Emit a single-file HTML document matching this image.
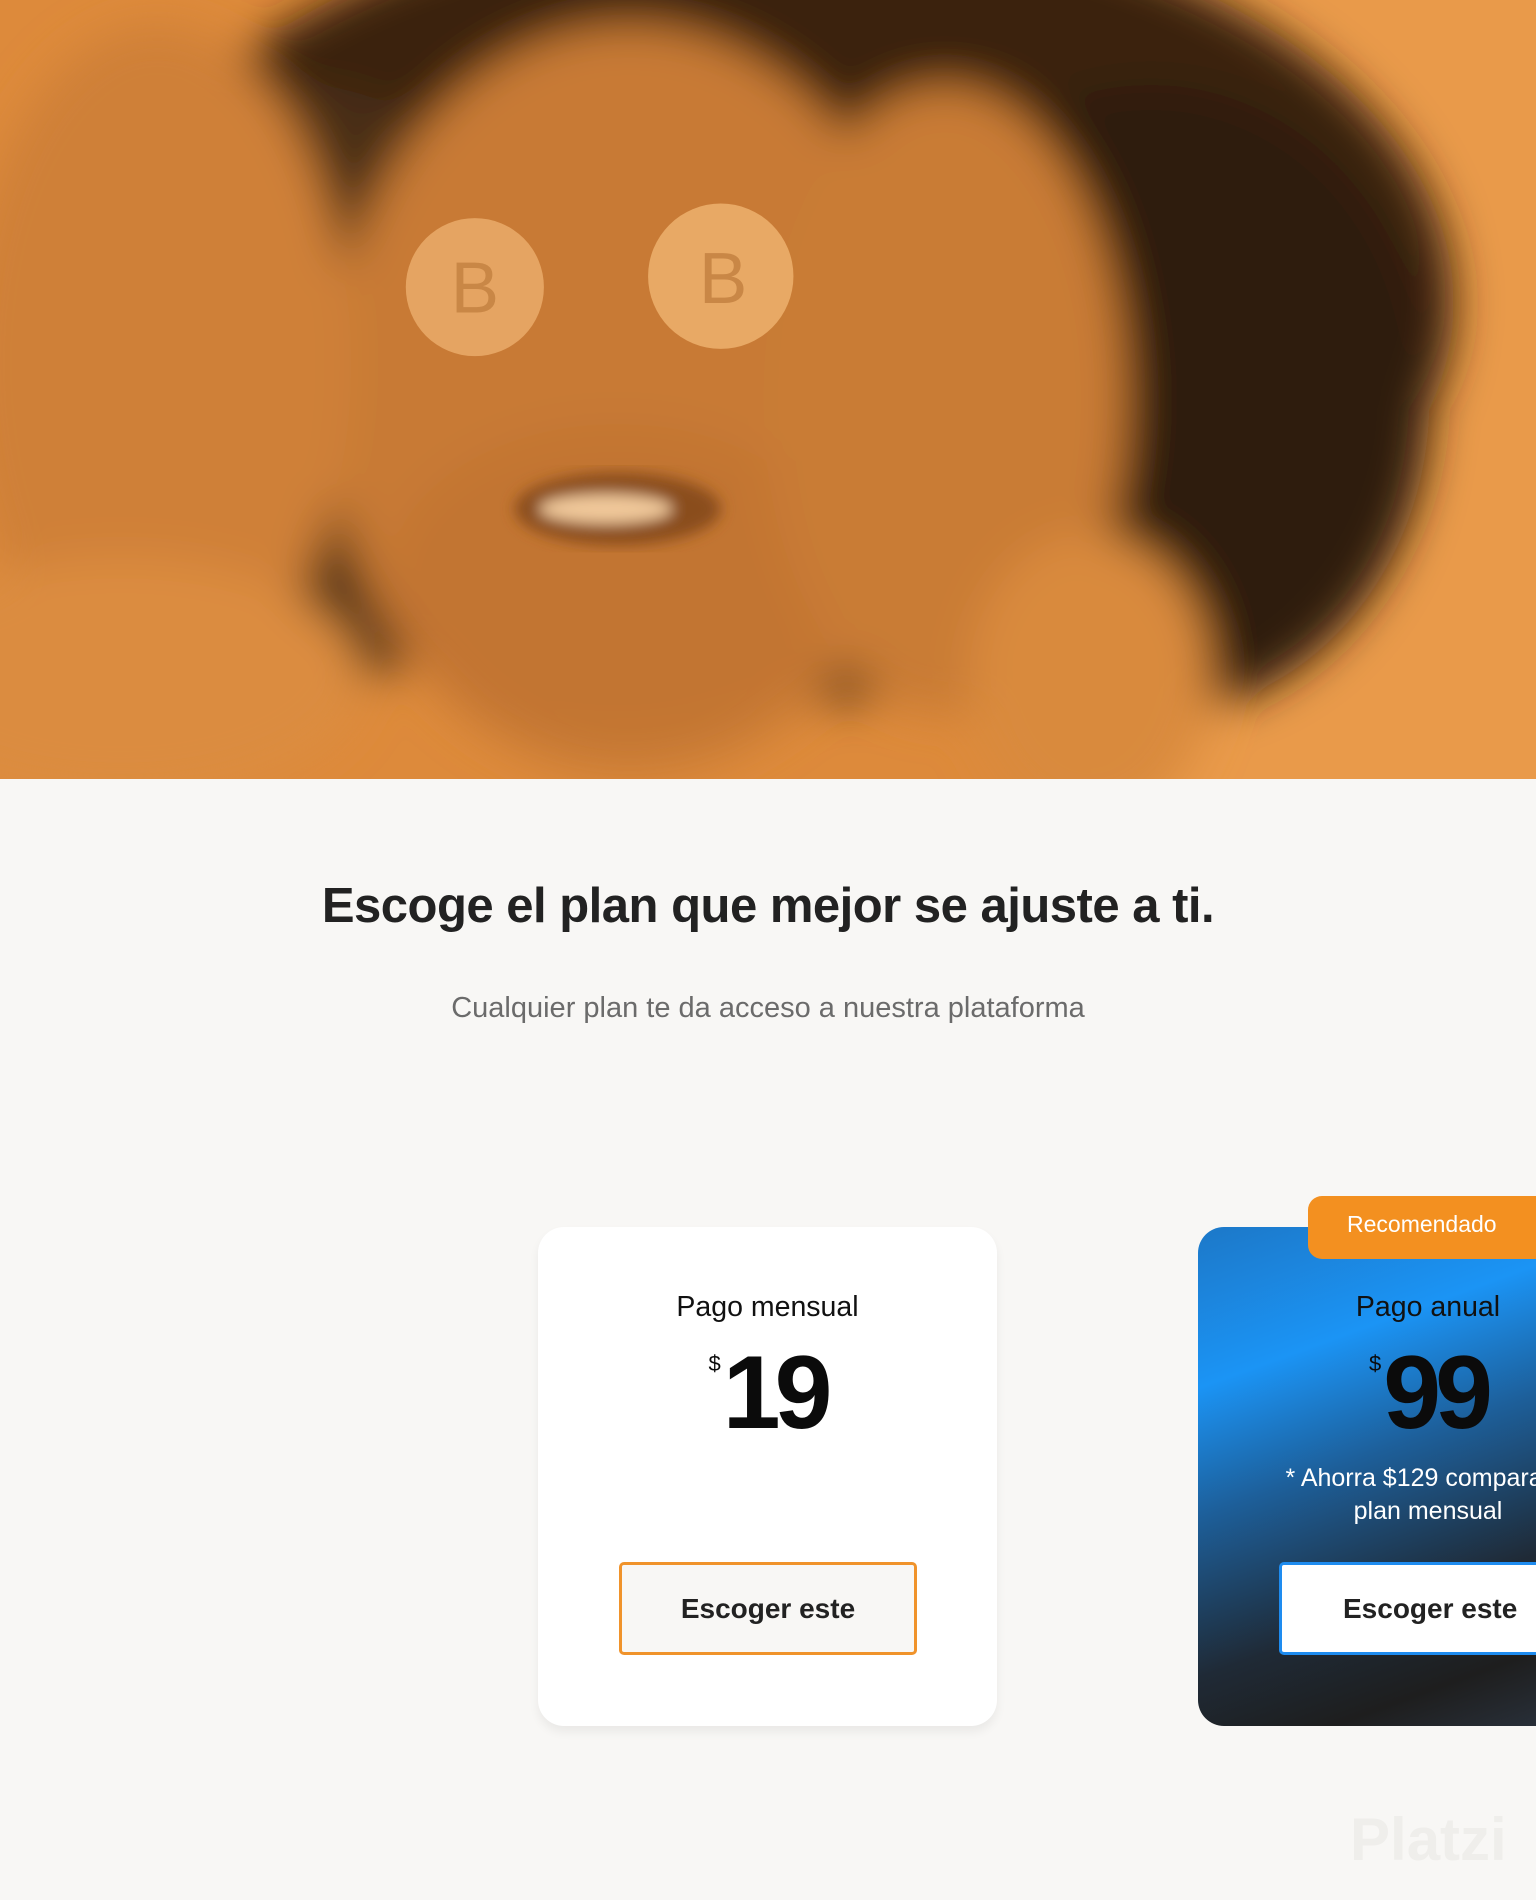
<!DOCTYPE html>
<html><head><meta charset="utf-8"><style>
*{margin:0;padding:0;box-sizing:border-box}
body{width:1536px;height:1900px;background:#f8f7f5;font-family:"Liberation Sans",sans-serif;position:relative;overflow:hidden}
.hero{position:absolute;left:0;top:0;width:1536px;height:779px;background:#d9883a;overflow:hidden}
h1{position:absolute;top:878px;left:0;width:1536px;text-align:center;font-size:49px;font-weight:bold;color:#222;letter-spacing:-0.5px}
.sub{position:absolute;top:992px;left:0;width:1536px;text-align:center;font-size:29px;color:#6b6b6b}
.card{position:absolute;top:1227px;height:499px;border-radius:26px}
.c1{left:538px;width:459px;background:#fff;box-shadow:0 6px 10px rgba(0,0,0,0.06)}
.c2{left:1198px;width:400px;background:linear-gradient(160deg,#1c78c8 0%,#1b94f5 25%,#1d5f9a 45%,#1f2a36 70%,#1e1e1e 85%,#2b3440 100%)}
.t{position:absolute;left:0;width:100%;text-align:center;font-size:28.5px;color:#111;top:64px}
.price{position:absolute;left:0;width:100%;text-align:center;top:114px;font-size:104px;font-weight:bold;color:#0b0b0b;letter-spacing:-6px;line-height:1}
.price sup{font-size:22px;font-weight:normal;vertical-align:top;position:relative;top:12px;letter-spacing:0;margin-right:2px}
.btn{position:absolute;top:335px;height:93px;border-radius:5px;text-align:center;line-height:87px;font-size:28px;font-weight:bold;color:#222}
.c1 .btn{left:81px;width:298px;border:3px solid #f0932b;background:#f8f7f5}
.c2 .btn{left:81px;width:400px;border:3px solid #1e8cf0;background:#fff;text-align:left;padding-left:61px}
.tab{position:absolute;left:1308px;top:1196px;width:260px;height:63px;background:#f39020;border-radius:14px 0 0 14px;color:#fff;font-size:23px;line-height:56px;padding-left:39px}
.save{position:absolute;left:0;width:460px;top:235px;text-align:center;color:#fff;font-size:25px;line-height:33px}
.wm{position:absolute;left:1350px;top:1805px;font-size:60px;color:#efeeeb;font-weight:bold}
</style></head><body>
<div class="hero">
<svg width="1536" height="779" viewBox="0 0 1268 643" preserveAspectRatio="none">
<defs><filter id="b"><feGaussianBlur stdDeviation="18"/></filter><filter id="b2"><feGaussianBlur stdDeviation="6"/></filter></defs>
<rect width="1268" height="643" fill="#dd8a3b"/>
<rect x="900" width="368" height="643" fill="#e99a4a"/>
<g filter="url(#b)">
<ellipse cx="640" cy="250" rx="560" ry="330" fill="#3a2410"/>
<ellipse cx="950" cy="330" rx="230" ry="260" fill="#2e1c0c"/>
<ellipse cx="250" cy="320" rx="200" ry="250" fill="#4a2e12"/>
<ellipse cx="520" cy="330" rx="250" ry="310" fill="#c87a34"/>
<ellipse cx="510" cy="480" rx="190" ry="130" fill="#c27533"/>
<ellipse cx="130" cy="300" rx="160" ry="280" fill="#cf8038"/>
<ellipse cx="780" cy="330" rx="150" ry="260" fill="#c97b36"/>
<ellipse cx="900" cy="560" rx="100" ry="120" fill="#d98a3e"/>
<ellipse cx="100" cy="560" rx="200" ry="100" fill="#db8c3f"/>
</g>
<g filter="url(#b2)">
<ellipse cx="510" cy="420" rx="85" ry="30" fill="#8a4d1f"/>
<ellipse cx="500" cy="420" rx="55" ry="12" fill="#f0c89a"/>
</g>
<circle cx="392" cy="237" r="57" fill="#e5a462"/>
<circle cx="595" cy="228" r="60" fill="#e8a965"/>
<text x="392" y="258" font-size="60" text-anchor="middle" fill="#c98746" font-family="Liberation Sans">B</text>
<text x="597" y="250" font-size="60" text-anchor="middle" fill="#c98746" font-family="Liberation Sans">B</text>
</svg>
</div>
<h1>Escoge el plan que mejor se ajuste a ti.</h1>
<div class="sub">Cualquier plan te da acceso a nuestra plataforma</div>
<div class="card c1">
<div class="t">Pago mensual</div>
<div class="price"><sup>$</sup>19</div>
<div class="btn">Escoger este</div>
</div>
<div class="card c2">
<div class="t" style="width:460px">Pago anual</div>
<div class="price" style="width:460px"><sup>$</sup>99</div>
<div class="save">* Ahorra $129 comparado<br>plan mensual</div>
<div class="btn">Escoger este</div>
</div>
<div class="tab">Recomendado</div>
<div class="wm">Platzi</div>
</body></html>
